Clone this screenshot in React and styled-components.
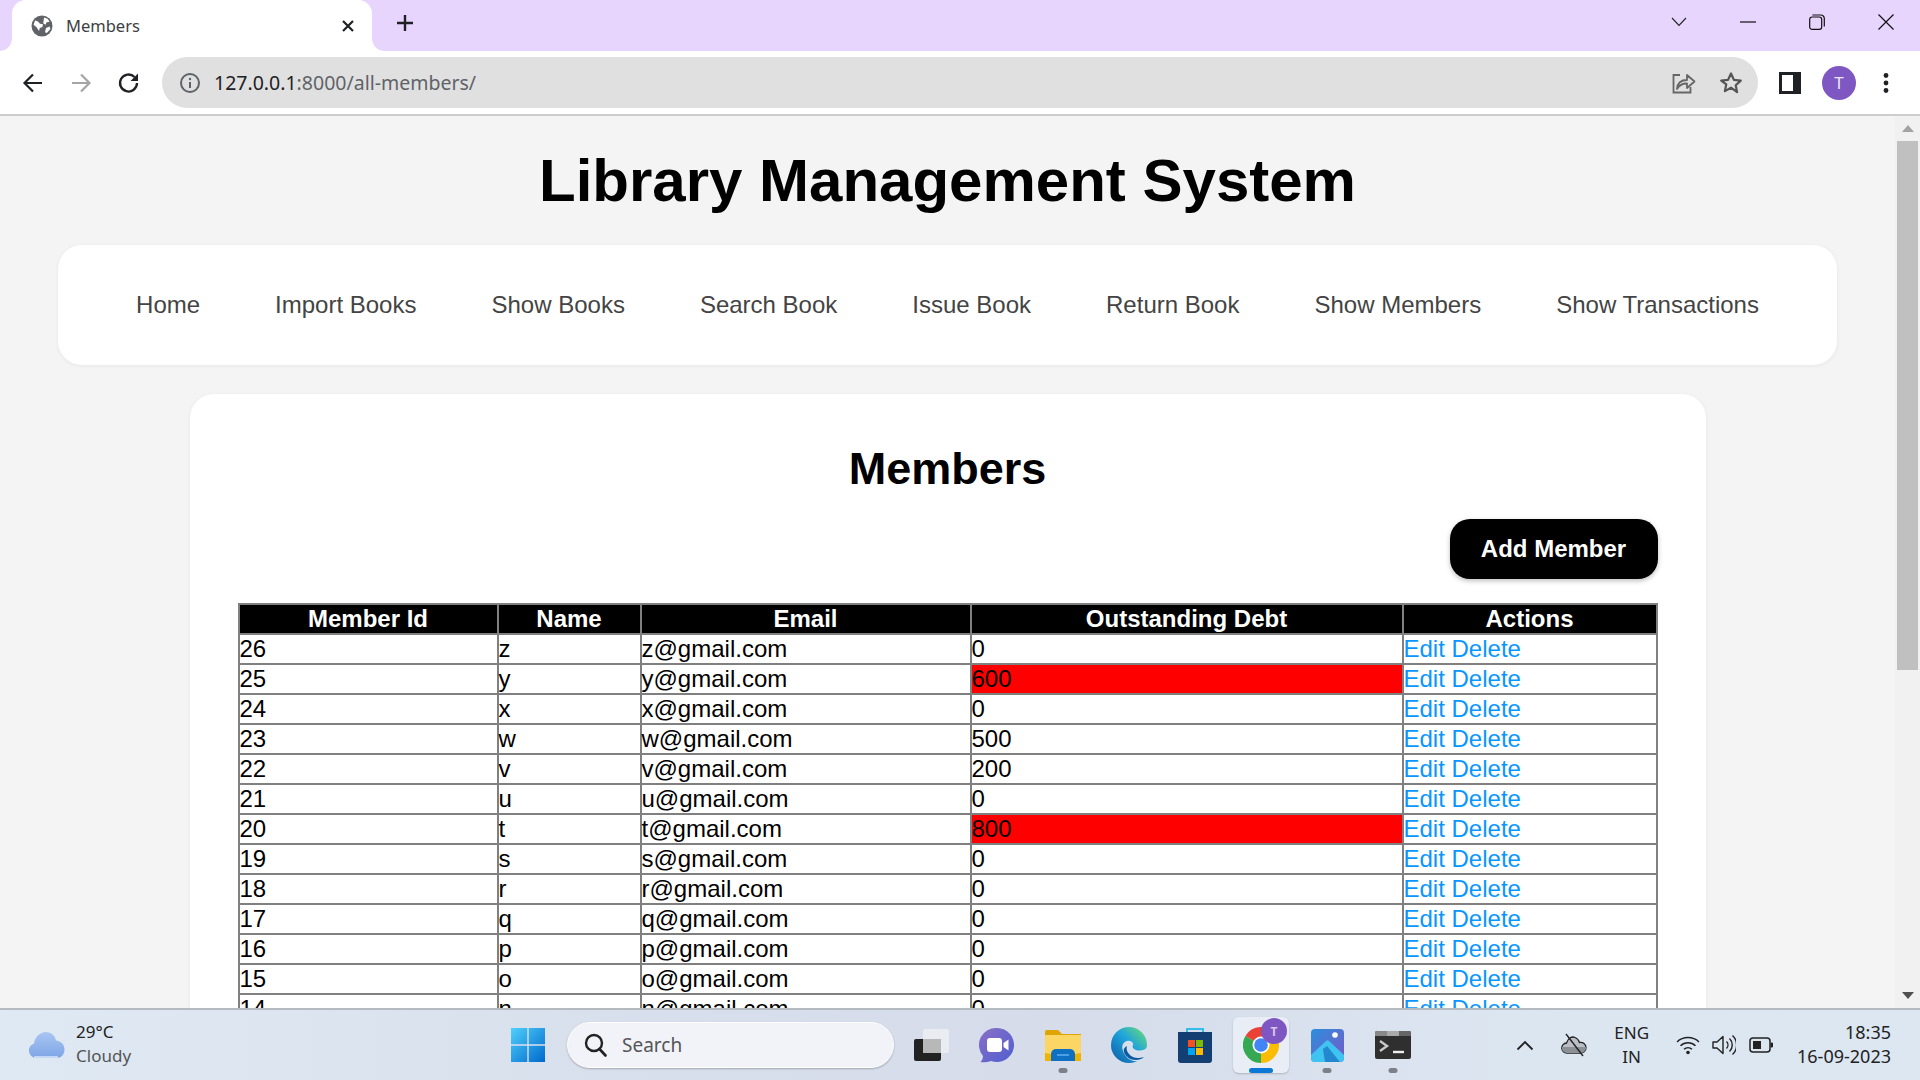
import React from "react";
import styled, { createGlobalStyle } from "styled-components";

const GlobalStyle = createGlobalStyle`
  html, body {
    margin: 0;
    height: 100%;
    overflow: hidden;
    font-family: "Liberation Sans", Arial, sans-serif;
  }
`;

const Screen = styled.div`
  width: 1920px;
  height: 1080px;
  display: flex;
  flex-direction: column;
  overflow: hidden;
`;

/* ---------- browser chrome ---------- */

const TabStrip = styled.div`
  height: 51px;
  background: #e8d5fd;
  display: flex;
  align-items: flex-end;
  padding-left: 12px;
  flex-shrink: 0;
`;

const Tab = styled.div`
  position: relative;
  width: 360px;
  height: 51px;
  box-sizing: border-box;
  background: #fff;
  border-radius: 14px 14px 0 0;
  display: flex;
  align-items: center;
  padding: 0 17px 0 19px;
  color: #3c4043;
  font: 16.5px "Noto Sans", sans-serif;

  &::before,
  &::after {
    content: "";
    position: absolute;
    bottom: 0;
    width: 12px;
    height: 12px;
    background: radial-gradient(circle at var(--cx) 0, #e8d5fd 11.5px, #fff 12px);
  }
  &::before {
    --cx: 0;
    left: -12px;
  }
  &::after {
    --cx: 100%;
    right: -12px;
  }
`;

const TabTitle = styled.span`
  margin-left: 13px;
  flex: 1;
`;

const NewTab = styled.div`
  margin: 0 0 8px 23px;
  height: 40px;
  display: flex;
  align-items: center;
`;

const WindowControls = styled.div`
  margin-left: auto;
  height: 51px;
  display: flex;
  align-items: center;
  padding: 0 26px 8px 0;
  box-sizing: border-box;
  gap: 53px;
`;

const Toolbar = styled.div`
  height: 63px;
  background: #fff;
  border-bottom: 2px solid #cdcdcd;
  display: flex;
  align-items: center;
  padding-left: 21px;
  flex-shrink: 0;
`;

const NavIcons = styled.div`
  display: flex;
  align-items: center;
  gap: 24px;
  width: 141px;
`;

const Omnibox = styled.div`
  width: 1596px;
  height: 51px;
  background: #e0e0e0;
  border-radius: 26px;
  display: flex;
  align-items: center;
  padding: 0 15px 0 17px;
  box-sizing: border-box;
`;

const Url = styled.div`
  margin-left: 13px;
  flex: 1;
  font: 19.5px "Noto Sans", sans-serif;
  color: #5f6368;
`;

const UrlHost = styled.span`
  color: #202124;
`;

const OmniActions = styled.div`
  display: flex;
  align-items: center;
  gap: 23px;
`;

const ToolbarRight = styled.div`
  display: flex;
  align-items: center;
  margin-left: 21px;
  gap: 21px;
`;

const Avatar = styled.div`
  width: 34px;
  height: 34px;
  border-radius: 50%;
  background: #7e57c2;
  color: #efe6fa;
  font: 17px "Noto Sans", sans-serif;
  display: flex;
  align-items: center;
  justify-content: center;
  margin-right: 6px;
`;

/* ---------- page ---------- */

const Viewport = styled.div`
  flex: 1;
  min-height: 0;
  display: flex;
`;

const Page = styled.main`
  flex: 1;
  min-width: 0;
  background: #f4f4f4;
  overflow: hidden;
`;

const Title = styled.h1`
  margin: 0;
  padding-top: 29px;
  height: 100px;
  box-sizing: content-box;
  font-size: 60px;
  line-height: 72px;
  font-weight: 700;
  text-align: center;
  color: #000;
`;

const Nav = styled.nav`
  margin: 0 58px;
  height: 120px;
  background: #fff;
  border-radius: 24px;
  box-shadow: 0 1px 4px rgba(0, 0, 0, 0.06);
  display: flex;
  align-items: center;
  justify-content: center;
  gap: 75px;
`;

const NavLink = styled.a`
  font-size: 24px;
  color: #444;
`;

const Card = styled.section`
  width: 1516px;
  box-sizing: border-box;
  margin: 29px auto 0;
  padding: 45px 48px 40px;
  background: #fff;
  border-radius: 24px;
  box-shadow: 0 1px 4px rgba(0, 0, 0, 0.06);
`;

const CardTitle = styled.h2`
  margin: 0;
  font-size: 45px;
  line-height: 60px;
  text-align: center;
  color: #000;
`;

const CardActions = styled.div`
  display: flex;
  justify-content: flex-end;
  margin: 20px 0 24px;
`;

const AddButton = styled.button`
  width: 208px;
  height: 60px;
  border: 0;
  border-radius: 20px;
  background: #000;
  color: #fff;
  font: 700 24px "Liberation Sans", Arial, sans-serif;
  box-shadow: 0 2px 5px rgba(0, 0, 0, 0.25);
`;

const Table = styled.table`
  width: 1418px;
  table-layout: fixed;
  border-collapse: collapse;
  font-size: 24px;
  color: #000;
`;

const Column = styled.col`
  width: ${(p) => p.$w}px;
`;

const HeadCell = styled.th`
  height: 28px;
  padding: 0;
  border: 2px solid #808080;
  background: #000;
  color: #fff;
  line-height: 28px;
  text-align: center;
`;

const Cell = styled.td`
  height: 28px;
  padding: 0;
  border: 2px solid #808080;
  line-height: 28px;
  background: ${(p) => (p.$overdue ? "#ff0000" : "#fff")};
`;

const ActionLink = styled.a`
  color: #0a96ff;
`;

/* ---------- scrollbar ---------- */

const Scrollbar = styled.div`
  width: 25px;
  background: #f1f1f1;
  display: flex;
  flex-direction: column;
  align-items: center;
`;

const ScrollArrow = styled.div`
  height: 25px;
  display: flex;
  align-items: center;
  justify-content: center;
`;

const ScrollThumb = styled.div`
  width: 21px;
  height: 529px;
  background: #c0c0c0;
`;

const ScrollFill = styled.div`
  flex: 1;
`;

/* ---------- taskbar ---------- */

const Taskbar = styled.footer`
  height: 72px;
  box-sizing: border-box;
  border-top: 2px solid #b5bac1;
  background: linear-gradient(90deg, #dfe9f3 0%, #d8dfec 35%, #d6dcea 55%, #dce6f1 80%, #dce7f2 100%);
  display: flex;
  align-items: center;
  flex-shrink: 0;
`;

const Weather = styled.div`
  width: 508px;
  box-sizing: border-box;
  padding-left: 28px;
  display: flex;
  align-items: center;
  gap: 11px;
`;

const WeatherText = styled.div`
  margin-top: -2px;
  font: 17px/24px "Noto Sans", sans-serif;
  color: #222;
`;

const WeatherSub = styled.div`
  color: #555;
`;

const StartButton = styled.div`
  width: 40px;
  display: flex;
  justify-content: center;
`;

const SearchBox = styled.div`
  width: 327px;
  height: 46px;
  box-sizing: border-box;
  margin-left: 19px;
  background: #f1f3f9;
  border-radius: 23px;
  border: 1px solid #fff;
  box-shadow: 0 1px 2px rgba(0, 0, 0, 0.25);
  display: flex;
  align-items: center;
  padding-left: 15px;
  gap: 13px;
  font: 19px "Noto Sans", sans-serif;
  color: #555;
`;

const AppRow = styled.div`
  display: flex;
  align-items: center;
  margin-left: 4px;
`;

const AppSlot = styled.div`
  position: relative;
  width: 56px;
  height: 56px;
  margin: 0 5px;
  display: flex;
  align-items: center;
  justify-content: center;
  border-radius: 6px;
  background: ${(p) => (p.$active ? "#e9edf6" : "transparent")};
  box-shadow: ${(p) => (p.$active ? "0 1px 2px rgba(0,0,0,0.2)" : "none")};
`;

const RunDot = styled.span`
  position: absolute;
  bottom: 0;
  left: 50%;
  transform: translateX(-50%);
  width: ${(p) => (p.$active ? 24 : 9)}px;
  height: 5px;
  border-radius: 3px;
  background: ${(p) => (p.$active ? "#0a78d4" : "#7d8088")};
`;

const AppBadge = styled.span`
  position: absolute;
  top: 1px;
  right: 2px;
  width: 26px;
  height: 26px;
  border-radius: 50%;
  background: #7e57c2;
  color: #d9c8f0;
  font: 700 12px "Noto Sans", sans-serif;
  display: flex;
  align-items: center;
  justify-content: center;
`;

const Tray = styled.div`
  margin-left: auto;
  display: flex;
  align-items: center;
  padding-right: 29px;
  color: #222;
`;

const TrayIcon = styled.div`
  display: flex;
  align-items: center;
  margin-left: ${(p) => p.$gap}px;
`;

const Lang = styled.div`
  margin-left: 27px;
  font: 17px/24px "Noto Sans", sans-serif;
  text-align: center;
`;

const Clock = styled.div`
  margin: -2px 0 0 24px;
  font: 18px/24px "Noto Sans", sans-serif;
  text-align: right;
`;

/* ---------- drawings ---------- */

const Globe = () => (
  <svg width="22" height="22" viewBox="0 0 22 22">
    <circle cx="11" cy="11" r="10.5" fill="#5f6368" />
    <path d="M4 5.5l3 1 2 2.2 3 .6-.6 2.6-2.6 1.2-.8 3-2.2-3.5L2.6 9.8zM13 2.5l3.6 1.3 2 3-3 .5-1 2.4-2.4-1.4L12.6 6zM15 13l3.6-1.6.8 2.6-3.6 4-1.8-.8z" fill="#fff" />
  </svg>
);

const CloseX = () => (
  <svg width="14" height="14" viewBox="0 0 14 14">
    <path d="M2 2l10 10M12 2L2 12" stroke="#202124" strokeWidth="2.2" />
  </svg>
);

const Plus = () => (
  <svg width="20" height="20" viewBox="0 0 20 20">
    <path d="M10 2v16M2 10h16" stroke="#202124" strokeWidth="2.4" />
  </svg>
);

const ChevronDown = () => (
  <svg width="16" height="10" viewBox="0 0 16 10">
    <path d="M1 1l7 7.5L15 1" fill="none" stroke="#222" strokeWidth="1.1" />
  </svg>
);

const Minimize = () => (
  <svg width="16" height="16" viewBox="0 0 16 16">
    <path d="M0 8h16" stroke="#111" strokeWidth="1.2" />
  </svg>
);

const Restore = () => (
  <svg width="16" height="16" viewBox="0 0 16 16">
    <rect x="0.7" y="3" width="12" height="12.3" rx="2.4" fill="none" stroke="#111" strokeWidth="1.2" />
    <path d="M3.4 1h8.4A3.4 3.4 0 0 1 15.3 4.4v8" fill="none" stroke="#111" strokeWidth="1.2" />
  </svg>
);

const CloseWin = () => (
  <svg width="16" height="16" viewBox="0 0 16 16">
    <path d="M.5.5l15 15M15.500.5l-15 15" stroke="#111" strokeWidth="1.2" />
  </svg>
);

const ArrowLeft = ({ color = "#202124" }) => (
  <svg width="24" height="24" viewBox="0 0 24 24">
    <path d="M21 12H4M12 3.500L3.500 12l8.500 8.500" fill="none" stroke={color} strokeWidth="2.200" />
  </svg>
);

const ArrowRight = () => (
  <svg width="24" height="24" viewBox="0 0 24 24">
    <path d="M3 12h17M12 3.500l8.500 8.500-8.500 8.500" fill="none" stroke="#a5a5a5" strokeWidth="2.200" />
  </svg>
);

const Reload = () => (
  <svg width="24" height="24" viewBox="0 0 24 24">
    <path d="M20 12a8.500 8.500 0 1 1-2.500-6" fill="none" stroke="#202124" strokeWidth="2.300" />
    <path d="M21 2.500v7.500h-7.500z" fill="#202124" />
  </svg>
);

const Info = () => (
  <svg width="22" height="22" viewBox="0 0 22 22">
    <circle cx="11" cy="11" r="9" fill="none" stroke="#5f6368" strokeWidth="2" />
    <path d="M11 10v6" stroke="#5f6368" strokeWidth="2" />
    <circle cx="11" cy="7" r="1.200" fill="#5f6368" />
  </svg>
);

const Share = () => (
  <svg width="24" height="22" viewBox="0 0 24 22">
    <path d="M8 3H1.500v17.500h17V15" fill="none" stroke="#666" strokeWidth="1.800" />
    <path d="M5 17c.5-6 4.500-9 10-9V3l7.500 6.500-7.500 6.500v-4.500c-4.500-.2-7.500 1.500-10 5.500z" fill="none" stroke="#666" strokeWidth="1.800" strokeLinejoin="round" />
  </svg>
);

const Star = () => (
  <svg width="24" height="24" viewBox="0 0 24 24">
    <path d="M12 2.500l2.900 6.300 6.900.8-5.100 4.700 1.400 6.800L12 16.700l-6.100 3.400 1.400-6.800L2.200 9.600l6.900-.8z" fill="none" stroke="#555" strokeWidth="2.200" strokeLinejoin="round" />
  </svg>
);

const SidePanel = () => (
  <svg width="22" height="22" viewBox="0 0 22 22">
    <rect width="22" height="22" fill="#202124" />
    <rect x="3" y="3" width="11" height="16" fill="#fff" />
  </svg>
);

const Dots = () => (
  <svg width="6" height="22" viewBox="0 0 6 22">
    <circle cx="3" cy="3.500" r="2.400" fill="#202124" />
    <circle cx="3" cy="11" r="2.400" fill="#202124" />
    <circle cx="3" cy="18.500" r="2.400" fill="#202124" />
  </svg>
);

const Triangle = ({ flip }) => (
  <svg width="12" height="7" viewBox="0 0 12 7">
    <path d={flip ? "M0 0h12L6 7z" : "M0 7h12L6 0z"} fill={flip ? "#505050" : "#a3a3a3"} />
  </svg>
);

const WeatherCloud = () => (
  <svg width="37" height="28" viewBox="0 0 37 28">
    <defs>
      <linearGradient id="cloudfill" x1="0" y1="0" x2="0" y2="1">
        <stop offset="0" stopColor="#a9c6f2" />
        <stop offset="1" stopColor="#7ea5e6" />
      </linearGradient>
    </defs>
    <path d="M8 27a7.500 7.500 0 0 1-2-14.600C7 6 12 1 18 1c5 0 9 3.500 10 8.500 4.800.5 8.500 4 8.500 9 0 5-3.500 8.500-8 8.500z" fill="url(#cloudfill)" />
    <path d="M6 26h24" stroke="#dbe8fb" strokeWidth="1.500" />
  </svg>
);

const WinLogo = () => (
  <svg width="36" height="36" viewBox="0 0 36 36">
    <defs>
      <linearGradient id="winfill" x1="0" y1="0" x2="1" y2="1">
        <stop offset="0" stopColor="#4fd0fb" />
        <stop offset="1" stopColor="#0069cc" />
      </linearGradient>
    </defs>
    <path d="M1 1h16.300v16.300H1zM18.700 1H35v16.300H18.700zM1 18.700h16.300V35H1zM18.700 18.700H35V35H18.700z" fill="url(#winfill)" />
  </svg>
);

const SearchGlass = () => (
  <svg width="26" height="26" viewBox="0 0 26 26">
    <circle cx="11" cy="11" r="8" fill="none" stroke="#222" strokeWidth="2.400" />
    <path d="M16.500 17l6 6.500" stroke="#222" strokeWidth="2.600" strokeLinecap="round" />
  </svg>
);

const TaskView = () => (
  <svg width="36" height="34" viewBox="0 0 36 34">
    <rect x="1" y="11" width="27" height="22" rx="2" fill="#222" />
    <rect x="10" y="1" width="26" height="24" rx="2" fill="#eceef2" opacity="0.85" />
    <rect x="10" y="11" width="18" height="14" fill="#b8b8b8" />
  </svg>
);

const ChatIcon = () => (
  <svg width="36" height="36" viewBox="0 0 36 36">
    <defs>
      <linearGradient id="chatfill" x1="0" y1="0" x2="1" y2="1">
        <stop offset="0" stopColor="#8b6fc7" />
        <stop offset="1" stopColor="#4f5fd0" />
      </linearGradient>
    </defs>
    <path d="M18 1a17 17 0 1 1-6 32.900C9 35 5 35.500 1.500 35c1.500-1.500 2.500-3.500 2.500-6A17 17 0 0 1 18 1z" fill="url(#chatfill)" />
    <rect x="8" y="11" width="15" height="14" rx="3" fill="#fff" />
    <path d="M24.500 16l5-3.500v11l-5-3.500z" fill="#fff" />
  </svg>
);

const FolderIcon = () => (
  <svg width="36" height="32" viewBox="0 0 36 32">
    <path d="M0 3a2 2 0 0 1 2-2h11l4 4h19v6H0z" fill="#dea400" />
    <path d="M0 6h36v26H0z" fill="#fcd665" />
    <path d="M6 32v-7a5 5 0 0 1 5-5h14a5 5 0 0 1 5 5v7z" fill="#0f6fc0" />
    <path d="M12 26h12" stroke="#5fb1ec" strokeWidth="1.500" />
    <path d="M30 32V25l6-1v8z" fill="#f0b400" />
    <path d="M0 32v-8l6 1v7z" fill="#f0b400" />
  </svg>
);

const EdgeIcon = () => (
  <svg width="36" height="36" viewBox="0 0 36 36">
    <defs>
      <linearGradient id="edgefill" x1="0" y1="1" x2="1" y2="0">
        <stop offset="0" stopColor="#0c59a4" />
        <stop offset="0.55" stopColor="#1fa5dc" />
        <stop offset="1" stopColor="#74e06a" />
      </linearGradient>
    </defs>
    <circle cx="18" cy="18" r="18" fill="url(#edgefill)" />
    <path d="M36 20c-2 4-8 4-11 3-3-1-4-3-3-5 1-3-3-5-6-4-4 1-6 5-4 10 2 6 9 13 19 9 3-2 5-6 5-13z" fill="#d8dfec" />
    <path d="M13 25c2 6 9 10 17 7 1-.5 2-1 3-2-6 2-12 1-15-3-2-2-3-5-2-8-2 1-4 3-3 6z" fill="#0c59a4" />
  </svg>
);

const StoreIcon = () => (
  <svg width="36" height="36" viewBox="0 0 36 36">
    <path d="M10 8V2h16v6" fill="none" stroke="#34bdea" strokeWidth="2" />
    <path d="M1 5h34v28a3 3 0 0 1-3 3H4a3 3 0 0 1-3-3z" fill="#143f73" />
    <rect x="11" y="13" width="7" height="7" fill="#f25022" />
    <rect x="19" y="13" width="7" height="7" fill="#7fba00" />
    <rect x="11" y="21" width="7" height="7" fill="#00a4ef" />
    <rect x="19" y="21" width="7" height="7" fill="#ffb900" />
  </svg>
);

const ChromeIcon = () => (
  <svg width="36" height="36" viewBox="0 0 36 36">
    <path d="M18 18L2.400 9A18 18 0 0 1 33.600 9z" fill="#ea4335" />
    <path d="M18 18L33.600 9A18 18 0 0 1 18 36z" fill="#fbbc04" />
    <path d="M18 18L18 36A18 18 0 0 1 2.400 9z" fill="#34a853" />
    <circle cx="18" cy="18" r="8.500" fill="#fff" />
    <circle cx="18" cy="18" r="6.800" fill="#4285f4" />
  </svg>
);

const PhotosIcon = () => (
  <svg width="33" height="33" viewBox="0 0 33 33">
    <defs>
      <linearGradient id="photofill" x1="0" y1="0" x2="1" y2="1">
        <stop offset="0" stopColor="#2b8fdc" />
        <stop offset="1" stopColor="#7a58c8" />
      </linearGradient>
    </defs>
    <rect width="33" height="33" rx="4" fill="url(#photofill)" />
    <circle cx="24" cy="6" r="2.800" fill="#fff" />
    <path d="M0 26l15-14c1-1 2-1 3 0l15 14v3a4 4 0 0 1-4 4H4a4 4 0 0 1-4-4z" fill="#3fc4f2" />
    <path d="M12 20l4-3 13 16H14z" fill="#1a6fc0" opacity="0.7" />
  </svg>
);

const TerminalIcon = () => (
  <svg width="36" height="28" viewBox="0 0 36 28">
    <rect width="36" height="28" rx="2" fill="#2f2f2f" />
    <path d="M0 2a2 2 0 0 1 2-2h10v5H0z" fill="#888" />
    <path d="M12 0h12v5H12z" fill="#aaa" />
    <path d="M24 0h10a2 2 0 0 1 2 2v3H24z" fill="#666" />
    <path d="M5 10l7 5-7 5" fill="none" stroke="#c8c8c8" strokeWidth="2.400" />
    <path d="M18 21h11" stroke="#eee" strokeWidth="2.400" />
  </svg>
);

const TrayChevron = () => (
  <svg width="18" height="11" viewBox="0 0 18 11">
    <path d="M1.500 9.500L9 2l7.500 7.500" fill="none" stroke="#222" strokeWidth="1.800" />
  </svg>
);

const OneDriveOff = () => (
  <svg width="26" height="24" viewBox="0 0 26 24">
    <path d="M6 20a5 5 0 0 1-.5-10C7 5 11 3 14 4.500c2.500 1 4 3 4.500 5 4-.5 6.500 2 6.500 5.300 0 3-2.500 5.200-5.500 5.200z" fill="#b9bdc4" stroke="#222" strokeWidth="1.300" />
    <path d="M1 14h24v1.500c-.5 2.500-2.500 4.500-5.500 4.500H6a5 5 0 0 1-5-6z" fill="#8c9097" />
    <path d="M5 1l17 22" stroke="#222" strokeWidth="1.400" />
  </svg>
);

const Wifi = () => (
  <svg width="24" height="20" viewBox="0 0 24 20">
    <path d="M1 7a16 16 0 0 1 22 0M4.500 10.800a11 11 0 0 1 15 0M8 14.300a6 6 0 0 1 8 0" fill="none" stroke="#222" strokeWidth="1.500" />
    <circle cx="12" cy="17.500" r="1.800" fill="#222" />
  </svg>
);

const Volume = () => (
  <svg width="24" height="22" viewBox="0 0 24 22">
    <path d="M1 8h4l6-5.500v17L5 14H1z" fill="none" stroke="#222" strokeWidth="1.400" strokeLinejoin="round" />
    <path d="M14.500 7.500a5 5 0 0 1 0 7M17.500 4.500a9 9 0 0 1 0 13M20.500 1.500a13 13 0 0 1 0 19" fill="none" stroke="#222" strokeWidth="1.400" />
  </svg>
);

const Battery = () => (
  <svg width="24" height="16" viewBox="0 0 24 16">
    <rect x="1" y="1" width="20" height="14" rx="3" fill="none" stroke="#222" strokeWidth="1.500" />
    <rect x="4" y="4" width="8" height="8" fill="#222" />
    <rect x="21.500" y="5.500" width="2.500" height="5" rx="1" fill="#222" />
  </svg>
);

const members = [
  [26, "z", 0], [25, "y", 600], [24, "x", 0], [23, "w", 500], [22, "v", 200],
  [21, "u", 0], [20, "t", 800], [19, "s", 0], [18, "r", 0], [17, "q", 0],
  [16, "p", 0], [15, "o", 0], [14, "n", 0],
];

const navItems = [
  "Home", "Import Books", "Show Books", "Search Book",
  "Issue Book", "Return Book", "Show Members", "Show Transactions",
];

const apps = [
  { icon: <TaskView /> },
  { icon: <ChatIcon /> },
  { icon: <FolderIcon />, running: true },
  { icon: <EdgeIcon /> },
  { icon: <StoreIcon /> },
  { icon: <ChromeIcon />, active: true, badge: "T" },
  { icon: <PhotosIcon />, running: true },
  { icon: <TerminalIcon />, running: true },
];

export default function App() {
  return (
    <Screen>
      <GlobalStyle />
      <TabStrip>
        <Tab>
          <Globe />
          <TabTitle>Members</TabTitle>
          <CloseX />
        </Tab>
        <NewTab><Plus /></NewTab>
        <WindowControls>
          <ChevronDown />
          <Minimize />
          <Restore />
          <CloseWin />
        </WindowControls>
      </TabStrip>
      <Toolbar>
        <NavIcons>
          <ArrowLeft />
          <ArrowRight />
          <Reload />
        </NavIcons>
        <Omnibox>
          <Info />
          <Url><UrlHost>127.0.0.1</UrlHost>:8000/all-members/</Url>
          <OmniActions>
            <Share />
            <Star />
          </OmniActions>
        </Omnibox>
        <ToolbarRight>
          <SidePanel />
          <Avatar>T</Avatar>
          <Dots />
        </ToolbarRight>
      </Toolbar>
      <Viewport>
        <Page>
          <Title>Library Management System</Title>
          <Nav>
            {navItems.map((item) => (
              <NavLink key={item}>{item}</NavLink>
            ))}
          </Nav>
          <Card>
            <CardTitle>Members</CardTitle>
            <CardActions>
              <AddButton>Add Member</AddButton>
            </CardActions>
            <Table>
              <colgroup>
                <Column $w={259} />
                <Column $w={143} />
                <Column $w={330} />
                <Column $w={432} />
                <Column $w={254} />
              </colgroup>
              <thead>
                <tr>
                  <HeadCell>Member Id</HeadCell>
                  <HeadCell>Name</HeadCell>
                  <HeadCell>Email</HeadCell>
                  <HeadCell>Outstanding Debt</HeadCell>
                  <HeadCell>Actions</HeadCell>
                </tr>
              </thead>
              <tbody>
                {members.map(([id, name, debt]) => (
                  <tr key={id}>
                    <Cell>{id}</Cell>
                    <Cell>{name}</Cell>
                    <Cell>{name}@gmail.com</Cell>
                    <Cell $overdue={debt > 500}>{debt}</Cell>
                    <Cell><ActionLink>Edit</ActionLink> <ActionLink>Delete</ActionLink></Cell>
                  </tr>
                ))}
              </tbody>
            </Table>
          </Card>
        </Page>
        <Scrollbar>
          <ScrollArrow><Triangle /></ScrollArrow>
          <ScrollThumb />
          <ScrollFill />
          <ScrollArrow><Triangle flip /></ScrollArrow>
        </Scrollbar>
      </Viewport>
      <Taskbar>
        <Weather>
          <WeatherCloud />
          <WeatherText>
            29°C
            <WeatherSub>Cloudy</WeatherSub>
          </WeatherText>
        </Weather>
        <StartButton><WinLogo /></StartButton>
        <SearchBox>
          <SearchGlass />
          Search
        </SearchBox>
        <AppRow>
          {apps.map((app, i) => (
            <AppSlot key={i} $active={app.active}>
              {app.icon}
              {app.badge && <AppBadge>{app.badge}</AppBadge>}
              {(app.running || app.active) && <RunDot $active={app.active} />}
            </AppSlot>
          ))}
        </AppRow>
        <Tray>
          <TrayIcon><TrayChevron /></TrayIcon>
          <TrayIcon $gap={27}><OneDriveOff /></TrayIcon>
          <Lang>ENG<br />IN</Lang>
          <TrayIcon $gap={27}><Wifi /></TrayIcon>
          <TrayIcon $gap={12}><Volume /></TrayIcon>
          <TrayIcon $gap={13}><Battery /></TrayIcon>
          <Clock>18:35<br />16-09-2023</Clock>
        </Tray>
      </Taskbar>
    </Screen>
  );
}
